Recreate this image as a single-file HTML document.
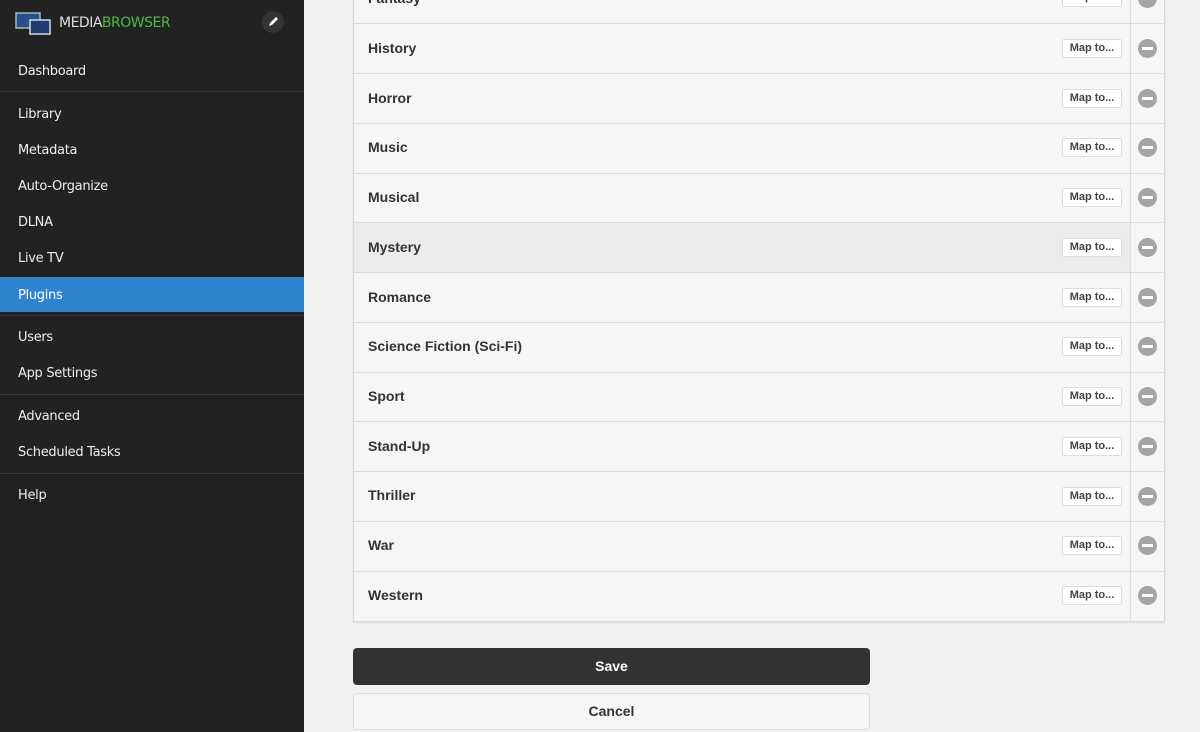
<!DOCTYPE html><html><head><style>
*{box-sizing:border-box}
body{margin:0;width:1200px;height:732px;overflow:hidden;background:#f2f2f2;font-family:"Liberation Sans",Arial,sans-serif;position:relative}
#sb{position:absolute;left:0;top:0;width:304px;height:732px;background:#222}
.n{position:absolute;left:18px;color:#eee;font-size:13px;font-family:"DejaVu Sans","Liberation Sans",sans-serif;letter-spacing:-0.3px}
.sep{position:absolute;left:0;width:304px;height:1px;background:#3a3a3a}
.r{position:absolute;left:354px;width:777px;height:50px;background:#f6f6f6}
.r span{position:absolute;left:14px;top:16px;font-size:14px;font-weight:bold;color:#333;font-family:"Liberation Sans",Arial,sans-serif}
.b{position:absolute;left:1062px;width:60px;height:19px;border:1px solid #ddd;background:#fff;border-radius:2px;font-size:11px;font-weight:bold;color:#444;text-align:center;line-height:17px;font-family:"Liberation Sans",Arial,sans-serif;z-index:3}
.m{position:absolute;left:1138px;width:19px;height:19px;border-radius:50%;background:#a5a5a5;z-index:3}
.m:after{content:"";position:absolute;left:4px;top:8px;width:11px;height:3px;background:#fff}
.l{position:absolute;left:354px;width:810px;height:1px;background:#ddd;z-index:2}
</style></head><body>
<div id="sb">
<svg style="position:absolute;left:15px;top:11px" width="38" height="26" viewBox="0 0 38 26"><rect x="1" y="2" width="24" height="15" fill="#2a4f8a" stroke="#9bb" stroke-width="1.5"/><rect x="15" y="9" width="20" height="14" fill="#1f3c70" stroke="#cde" stroke-width="1.5"/></svg>
<div style="position:absolute;left:59px;top:15px;font-size:14px;font-family:'DejaVu Sans',sans-serif;letter-spacing:-0.5px;color:#ddd">MEDIA<span style="color:#52b54b">BROWSER</span></div>
<div style="position:absolute;left:262px;top:11px;width:22px;height:22px;border-radius:50%;background:#333"><svg width="22" height="22" viewBox="0 0 22 22"><path d="M7 15l1-3 6-6 2 2-6 6z" fill="#fff"/></svg></div>
<div class="n" style="top:64px">Dashboard</div><div class="sep" style="top:91px"></div>
<div class="n" style="top:107px">Library</div>
<div class="n" style="top:143px">Metadata</div>
<div class="n" style="top:179px">Auto-Organize</div>
<div class="n" style="top:215px">DLNA</div>
<div class="n" style="top:251px">Live TV</div>
<div style="position:absolute;left:0;top:277px;width:304px;height:35px;background:#3083cf"></div>
<div class="n" style="top:288px;color:#fff">Plugins</div><div class="sep" style="top:315px"></div>
<div class="n" style="top:330px">Users</div>
<div class="n" style="top:366px">App Settings</div><div class="sep" style="top:394px"></div>
<div class="n" style="top:409px">Advanced</div>
<div class="n" style="top:445px">Scheduled Tasks</div><div class="sep" style="top:473px"></div>
<div class="n" style="top:488px">Help</div>
</div>
<div style="position:absolute;left:353px;top:-30px;width:812px;height:652px;border:1px solid #d8d8d8;border-top:none;box-shadow:0 1px 2px rgba(0,0,0,.1);background:#f6f6f6"></div>
<div class="r" style="top:-26px"><span>Fantasy</span></div><div class="b" style="top:-12px">Map to...</div><div class="m" style="top:-11px"></div>
<div class="r" style="top:24px"><span>History</span></div><div class="b" style="top:39px">Map to...</div><div class="m" style="top:39px"></div>
<div class="r" style="top:74px"><span>Horror</span></div><div class="b" style="top:89px">Map to...</div><div class="m" style="top:89px"></div>
<div class="r" style="top:123px"><span>Music</span></div><div class="b" style="top:138px">Map to...</div><div class="m" style="top:138px"></div>
<div class="r" style="top:173px"><span>Musical</span></div><div class="b" style="top:188px">Map to...</div><div class="m" style="top:188px"></div>
<div class="r" style="top:223px;background:#ebebeb;height:49px"><span>Mystery</span></div><div class="b" style="top:238px">Map to...</div><div class="m" style="top:238px"></div>
<div class="r" style="top:273px"><span>Romance</span></div><div class="b" style="top:288px">Map to...</div><div class="m" style="top:288px"></div>
<div class="r" style="top:322px"><span>Science Fiction (Sci-Fi)</span></div><div class="b" style="top:337px">Map to...</div><div class="m" style="top:337px"></div>
<div class="r" style="top:372px"><span>Sport</span></div><div class="b" style="top:387px">Map to...</div><div class="m" style="top:387px"></div>
<div class="r" style="top:422px"><span>Stand-Up</span></div><div class="b" style="top:437px">Map to...</div><div class="m" style="top:437px"></div>
<div class="r" style="top:471px"><span>Thriller</span></div><div class="b" style="top:487px">Map to...</div><div class="m" style="top:487px"></div>
<div class="r" style="top:521px"><span>War</span></div><div class="b" style="top:536px">Map to...</div><div class="m" style="top:536px"></div>
<div class="r" style="top:571px"><span>Western</span></div><div class="b" style="top:586px">Map to...</div><div class="m" style="top:586px"></div>
<div class="l" style="top:23px"></div><div class="l" style="top:73px"></div><div class="l" style="top:123px"></div><div class="l" style="top:173px"></div><div class="l" style="top:222px"></div><div class="l" style="top:272px"></div><div class="l" style="top:322px"></div><div class="l" style="top:372px"></div><div class="l" style="top:421px"></div><div class="l" style="top:471px"></div><div class="l" style="top:521px"></div><div class="l" style="top:571px"></div>
<div style="position:absolute;left:1130px;top:0;width:1px;height:621px;background:#ddd;z-index:2"></div>
<div style="position:absolute;left:353px;top:648px;width:517px;height:37px;background:#333;border-radius:4px;color:#fff;font-weight:bold;font-size:14px;text-align:center;line-height:37px">Save</div>
<div style="position:absolute;left:353px;top:693px;width:517px;height:37px;background:#f6f6f6;border:1px solid #ddd;border-radius:4px;color:#333;font-weight:bold;font-size:14px;text-align:center;line-height:35px">Cancel</div>
</body></html>
